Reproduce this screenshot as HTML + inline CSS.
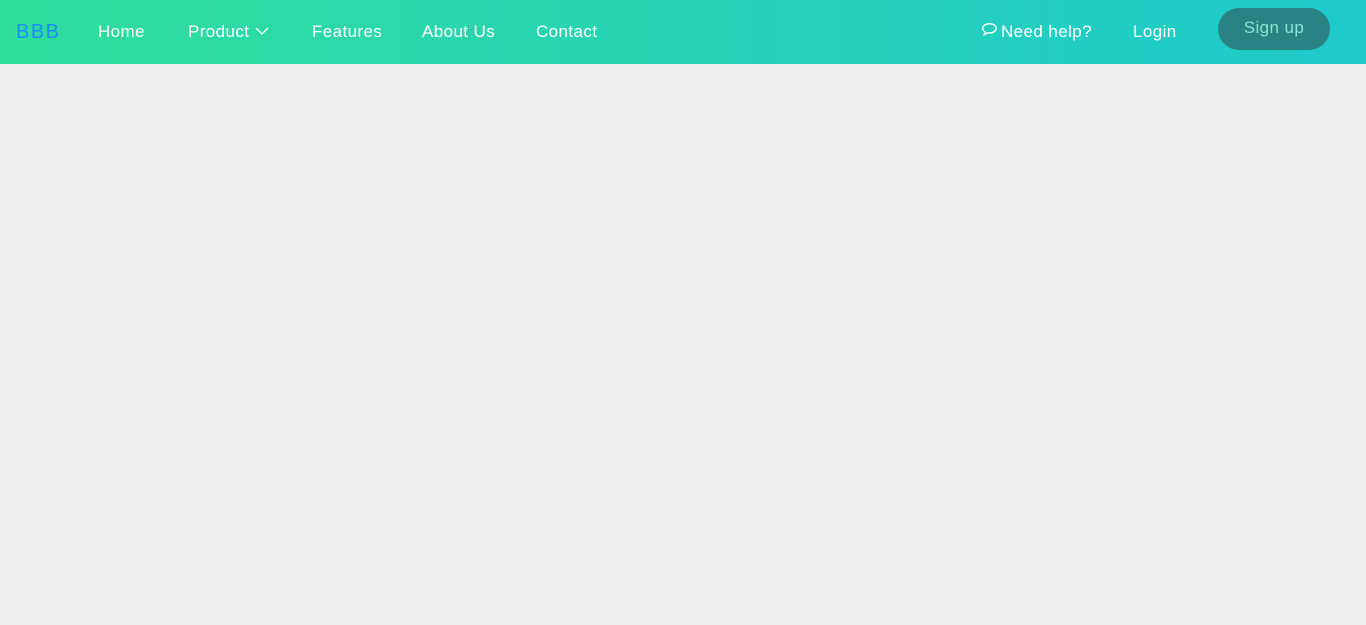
<!DOCTYPE html>
<html><head><style>
body{margin:0;background:#eeeeee;font-family:"Liberation Sans",sans-serif;width:1366px;height:625px;overflow:hidden}
.nav{position:relative;height:64px;background:linear-gradient(90deg,#2fdd9b,#1fcacd);color:#fff;font-size:17px;letter-spacing:0.4px}
.nav span{position:absolute;top:22px;white-space:nowrap}
.logo{color:#1a8cff;font-size:20px;left:16px;top:21px!important;letter-spacing:1.5px}
.btn{position:absolute;left:1218px;top:8px;width:112px;height:42px;border-radius:21px;background:#2a8282;color:#8be5d6;font-size:17px;letter-spacing:0.4px;text-align:center;line-height:40px}
</style></head><body>
<div class="nav">
<span class="logo">BBB</span>
<span style="left:98px">Home</span>
<span style="left:188px">Product<svg width="14" height="8" viewBox="0 0 14 8" style="margin-left:6px;vertical-align:2px"><path d="M1 1l6 6 6-6" stroke="#fff" stroke-width="1.3" fill="none"/></svg></span>
<span style="left:312px">Features</span>
<span style="left:422px">About Us</span>
<span style="left:536px">Contact</span>
<span style="left:981px"><svg width="17" height="15" viewBox="0 0 16 14" style="vertical-align:0px;margin-right:3px"><path d="M8 1.5C4.4 1.5 1.7 3.5 1.7 6c0 1.3.7 2.4 1.9 3.2L3 12l3-1.9c.6.1 1.3.2 2 .2 3.6 0 6.3-2 6.3-4.4S11.6 1.5 8 1.5z" stroke="#fff" stroke-width="1.3" fill="none"/></svg>Need help?</span>
<span style="left:1133px">Login</span>
<div class="btn">Sign up</div>
</div>
</body></html>
